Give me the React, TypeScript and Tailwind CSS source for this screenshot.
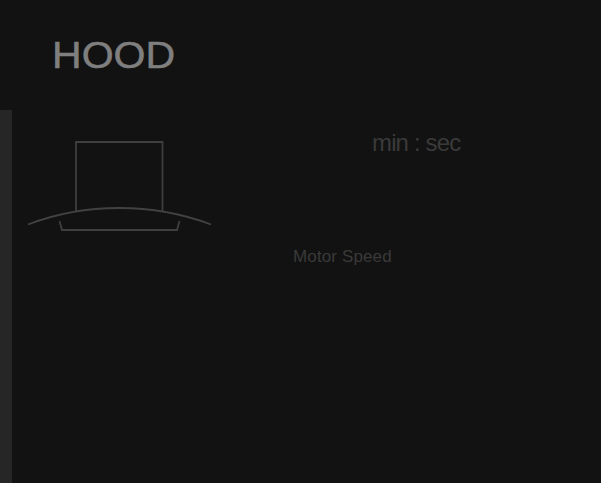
export default function App() {
  return (
    <div className="w-[601px] h-[483px] bg-[#121212] overflow-hidden flex flex-col antialiased font-['Liberation_Sans',Arial,sans-serif]">
      <header className="h-[110px] shrink-0 pl-[52px] pt-[35px]">
        <h1 className="text-[36px] leading-[41px] font-normal text-[#7f7f7f] [-webkit-text-stroke:0.5px_#7f7f7f] origin-left scale-x-[1.14] w-fit">HOOD</h1>
      </header>
      <div className="flex flex-1">
        <div className="w-3 bg-[#262626]" />
        <div className="w-[216px] pt-[30px] pl-[14px] shrink-0">
          <svg width="190" height="94" viewBox="26 140 190 94" fill="none" stroke="#3f3f3f">
            <path d="M76 211V142H162.500V211" strokeWidth="1.8" />
            <path d="M28 224.500C85 202.500 153 202.500 211 224.500" strokeWidth="1.8" stroke="#424242" />
            <path d="M59.500 221L62 230H177L179.500 221" strokeWidth="1.8" />
          </svg>
        </div>
        <div className="flex-1 flex flex-col pl-[65px]">
          <div className="pl-[79px] pt-[19px] text-[24px] leading-[28px] tracking-[-0.85px] text-[#3a3a3a]">min : sec</div>
          <div className="pt-[90px] text-[17px] leading-5 tracking-[0.13px] text-[#3a3a3a]">Motor Speed</div>
        </div>
      </div>
    </div>
  );
}
